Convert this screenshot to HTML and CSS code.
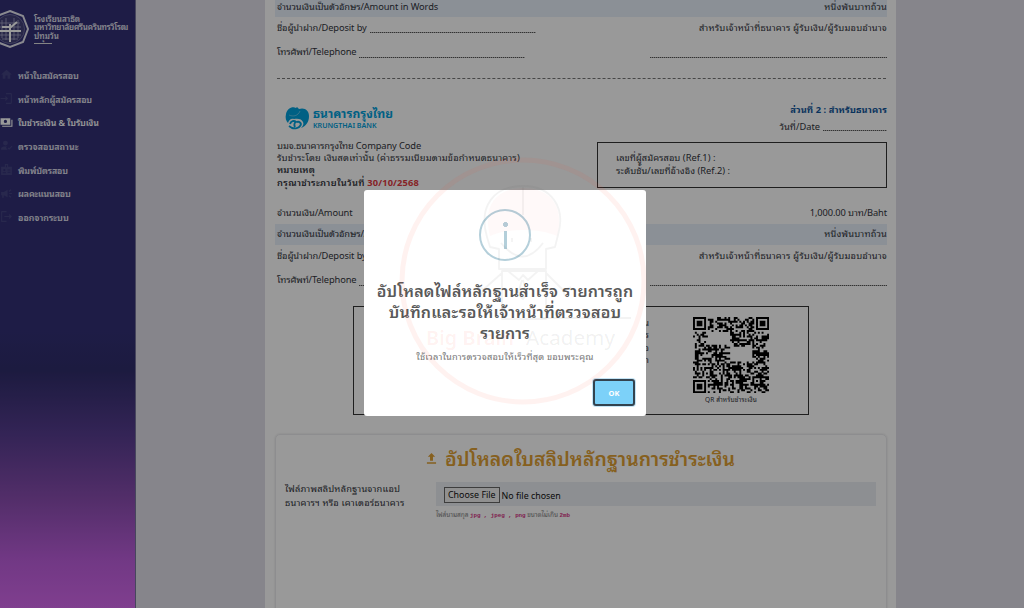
FILE: index.html
```
<!DOCTYPE html>
<html lang="th">

<head>
  <meta charset="UTF-8">
  <title>ใบชำระเงิน</title>
  <link rel="stylesheet" href="styles.css">
</head>

<body>
  <div class="layout">
    <nav class="sidebar">
      <div class="brand">
        <svg class="brand-logo" viewBox="0 0 40 40">
          <path d="M20 2 L33 7 L38 20 L33 33 L20 38 L7 33 L2 20 L7 7 Z" fill="none" stroke="#e4e4ee" stroke-width="2" />
          <circle cx="20" cy="20" r="14.5" fill="#434279" stroke="#6b6a9c" stroke-width="1" />
          <path d="M10 14H30M9 18H31M9 26H31M12 30H28M12 11V29M16 9V31M24 9V31M28 11V29" stroke="#a9a8c8" stroke-width=".8" />
          <path d="M20 15V33M10 22H31M12 18L21 18L27 13" fill="none" stroke="#fff" stroke-width="2" />
        </svg>
        <div class="brand-name">
          <div>โรงเรียนสาธิต</div>
          <div class="brand-uni">มหาวิทยาลัยศรีนครินทรวิโรฒ</div>
          <div>ปทุมวัน</div>
          <i class="brand-line"></i>
        </div>
      </div>
      <div class="menu">
        <a class="item"><svg viewBox="0 0 24 24"><path d="M10 20v-6h4v6h5v-8h3L12 3 2 12h3v8z" /></svg><span>หน้าใบสมัครสอบ</span></a>
        <a class="item"><svg viewBox="0 0 24 24"><path d="M10 17l5-5-5-5v4H1v2h9zM11 2h9a2 2 0 0 1 2 2v16a2 2 0 0 1-2 2h-9v-2h9V4h-9z" /></svg><span>หน้าหลักผู้สมัครสอบ</span></a>
        <a class="item active"><svg viewBox="0 0 24 24"><path d="M1 4h18v12H1zM10 7a3 3 0 1 0 0 6 3 3 0 0 0 0-6M21 7h2v13H4v-2h17z" fill-rule="evenodd" /></svg><span>ใบชำระเงิน &amp; ใบรับเงิน</span></a>
        <a class="item"><svg viewBox="0 0 24 24"><path d="M10 3a4 4 0 1 1 0 9 4 4 0 0 1 0-9M2 20v-3c1-3 6-4 11-3l-2 2 3 4zM14 17l3 3 6-6-1.500-1.500L17 17l-1.500-1.500z" /></svg><span class="status">ตรวจสอบสถานะ</span></a>
        <a class="item"><svg viewBox="0 0 24 24"><path d="M2 7h7V2h6v5h7v15H2zM11 4v4h2V4zM8 11a2 2 0 1 0 0 4 2 2 0 0 0 0-4M5 19h6v-2H5zM14 12v2h5v-2zM14 16v2h5v-2z" fill-rule="evenodd" /></svg><span>พิมพ์บัตรสอบ</span></a>
        <a class="item"><svg viewBox="0 0 24 24"><path d="M2 9h5l7-4v14l-7-4v5H4v-5H2zM17 11h5v2h-5zM16 7l4-3 1 2-4 3zM16 17l4 3 1-2-4-3z" /></svg><span>ผลคะแนนสอบ</span></a>
        <a class="item"><svg viewBox="0 0 24 24"><path d="M17 7l5 5-5 5v-4H8v-2h9zM3 2h9v2H4v16h8v2H3a1 1 0 0 1-1-1V3z" /></svg><span class="status">ออกจากระบบ</span></a>
      </div>
    </nav>

    <main class="page">
      <div class="paper">
        <div class="row band band-top"><span class="words">จำนวนเงินเป็นตัวอักษร/Amount in Words</span><span class="wide">หนึ่งพันบาทถ้วน</span></div>
        <div class="row deposit"><span class="lead"><span class="words">ชื่อผู้นำฝาก/Deposit by</span><i class="dots w166"></i></span><span class="wide">สำหรับเจ้าหน้าที่ธนาคาร ผู้รับเงิน/ผู้รับมอบอำนาจ</span></div>
        <div class="row phone"><span class="lead"><span class="words">โทรศัพท์/Telephone</span><i class="dots w166"></i></span><i class="dots w237"></i></div>
        <div class="cut"></div>

        <div class="bank-head">
          <div class="bank">
            <svg class="bank-logo" viewBox="0 0 24 25">
              <path d="M11 2C7 0 2 3 1 8c-1 4 0 7 2 9 1-3 3-5 6-4 4-1 8 0 9 3 1 2 0 4-2 6 5-2 8-6 8-12 0-5-4-9-10-7l-2-2z" fill="#00a0dc" />
              <path d="M5 18c1-3 4-4 6-2-2 1-2 3-1 5M12 16c3-1 5 2 3 4-1 2-5 3-8 2l-3-2" fill="none" stroke="#00a0dc" stroke-width="1.900" />
              <path d="M4 9c4 2 9 1 11-4" fill="none" stroke="#fff" stroke-opacity=".6" stroke-width=".6" />
            </svg>
            <div>
              <div class="bank-th">ธนาคารกรุงไทย</div>
              <div class="bank-en">KRUNGTHAI BANK</div>
            </div>
          </div>
          <div class="part">
            <b class="part-title">ส่วนที่ 2 : สำหรับธนาคาร</b>
            <span class="lead"><span class="date">วันที่/Date</span><i class="dots w64"></i></span>
          </div>
        </div>

        <div class="company">
          <div class="notes">
            <div class="words">บมจ.ธนาคารกรุงไทย Company Code</div>
            <div class="wide">รับชำระโดย เงินสดเท่านั้น (ค่าธรรมเนียมตามข้อกำหนดธนาคาร)</div>
            <div class="strong">หมายเหตุ</div>
            <div class="strong"><span class="pay-by">กรุณาชำระภายในวันที่</span> <span class="due">30/10/2568</span></div>
          </div>
          <div class="refs">
            <div>เลขที่ผู้สมัครสอบ (Ref.1) :</div>
            <div>ระดับชั้น/เลขที่อ้างอิง (Ref.2) :</div>
          </div>
        </div>

        <div class="row amount"><span class="words">จำนวนเงิน/Amount</span><span class="words">1,000.00 บาท/Baht</span></div>
        <div class="row band"><span class="words">จำนวนเงินเป็นตัวอักษร/Amount in Words</span><span class="wide">หนึ่งพันบาทถ้วน</span></div>
        <div class="row deposit"><span class="lead"><span class="words">ชื่อผู้นำฝาก/Deposit by</span><i class="dots w166"></i></span><span class="wide">สำหรับเจ้าหน้าที่ธนาคาร ผู้รับเงิน/ผู้รับมอบอำนาจ</span></div>
        <div class="row phone"><span class="lead"><span class="words">โทรศัพท์/Telephone</span><i class="dots w166"></i></span><i class="dots w237"></i></div>

        <div class="pay-box">
          <div class="pay-note">
            <div>น</div>
            <div>ร</div>
            <div>อ</div>
            <div>า</div>
          </div>
          <div class="qr">
            <svg id="qr" viewBox="0 0 41 41"></svg>
            <div class="qr-text">QR สำหรับชำระเงิน</div>
          </div>
        </div>

        <section class="upload">
          <h2 class="upload-title">
            <svg viewBox="0 0 12 12"><path d="M6 0l4 4.200H7.600V8.500H4.400V4.200H2zM1 10h10v1.600H1z" /></svg>
            <span>อัปโหลดใบสลิปหลักฐานการชำระเงิน</span>
          </h2>
          <div class="field">
            <label class="field-label">ไฟล์ภาพสลิปหลักฐานจากแอป<br>ธนาคารฯ หรือ เคาเตอร์ธนาคาร</label>
            <div class="field-body">
              <div class="file"><span class="file-btn">Choose File</span><span class="file-name">No file chosen</span></div>
              <div class="hint">ไฟล์นามสกุล <code>jpg , jpeg , png</code> ขนาดไม่เกิน <code>2mb</code></div>
            </div>
          </div>
        </section>
      </div>
    </main>
  </div>

  <div class="overlay">
    <div class="modal">
      <div class="modal-icon"><i></i></div>
      <div class="modal-title">
        <div class="line-first">อัปโหลดไฟล์หลักฐานสำเร็จ รายการถูก</div>
        <div class="line-second">บันทึกและรอให้เจ้าหน้าที่ตรวจสอบ</div>
        <div>รายการ</div>
      </div>
      <div class="modal-text">ใช้เวลาในการตรวจสอบให้เร็วที่สุด ขอบพระคุณ</div>
      <div class="modal-footer"><button class="ok">OK</button></div>
    </div>
  </div>

  <svg class="watermark" viewBox="0 0 250 250">
    <circle cx="125" cy="125" r="121" fill="none" stroke="#ff4a30" stroke-opacity=".07" stroke-width="5" />
    <path d="M92 80C84 50 98 32 125 32s42 18 34 48c-18-8-49-8-67 0z" fill="#ff4a30" fill-opacity=".03" />
    <g fill="none" stroke="#555" stroke-opacity=".07" stroke-width="1.800" stroke-linejoin="round">
      <path d="M101 93l-9-2-3-10C80 50 96 30 125 30s43 22 35 49l-3 12-9 2v20h-47z" />
      <path d="M125 31v28M103 87q22 27 42 0M114 82v4M133 82v4M104 115h44v48h-44zM104 117L86 133l-9-3M86 133l-3 6M148 117l17 17 8-3M165 134l2 6M110 115l11 9 4-5 5 5 10-9M124 124l-4 14 5 5 4-5-4-14" />
      <path d="M143 162h90" />
    </g>
    <text class="wm-red" x="28" y="189" textLength="88" lengthAdjust="spacingAndGlyphs">Big Brain</text>
    <text class="wm-grey" x="128" y="189" textLength="89" lengthAdjust="spacingAndGlyphs">Academy</text>
  </svg>

  <script src="script.js"></script>
</body>

</html>
```
FILE: styles.css
```
* {
  box-sizing: border-box;
}

body {
  margin: 0;
  height: 608px;
  overflow: hidden;
  font-family: "Noto Sans", "Noto Sans Thai Looped", "Noto Looped Thai", "Noto Sans Thai", sans-serif;
  font-size: 9.3px;
  color: #32343c;
  white-space: nowrap;
}

.layout {
  display: flex;
  height: 608px;
}

/* sidebar */
.sidebar {
  width: 136px;
  flex: none;
  padding-top: 9px;
  overflow: hidden;
  border-right: 1px solid #77769b;
  color: #fff;
  background: linear-gradient(#323076 0%, #323076 54%, #302d6b 61%, #553c8e 71%, #8a4db0 82%, #bd5edd 92%, #d569ee 100%);
}

.brand {
  display: flex;
  height: 54px;
}

.brand-logo {
  width: 40px;
  height: 40px;
  margin-left: -10px;
  flex: none;
}

.brand-name {
  margin: 6px 0 0 4px;
  font-size: 8px;
  font-weight: 600;
  line-height: 8.3px;
  color: #e4e4ee;
}

.brand-uni {
  letter-spacing: -.18px;
}

.brand-line {
  display: block;
  width: 18px;
  height: 1.5px;
  margin-top: 3px;
  background: #ddd;
}

.item {
  display: flex;
  align-items: center;
  height: 23.7px;
  font-size: 8.8px;
  font-weight: 600;
  letter-spacing: -.1px;
  color: #e4e4ee;
}

.item svg {
  width: 13px;
  height: 13px;
  margin-right: 5px;
  fill: #444380;
}

.item.active svg {
  fill: #fff;
}

.item.active {
  color: #fff;
}

.status {
  letter-spacing: .08px;
}

/* payment slip */
.page {
  flex: 1;
  background: #dfdee8;
}

.paper {
  width: 631px;
  height: 608px;
  margin-left: 129px;
  padding: 0 9px 0 10px;
  background: #fff;
}

.words {
  letter-spacing: -.11px;
}

.wide {
  letter-spacing: .17px;
}

.row {
  display: flex;
  align-items: center;
  justify-content: space-between;
  padding: 0 0 4px 2px;
  line-height: 13px;
}

.band {
  height: 21px;
  padding-bottom: 2px;
  background: #e8f0fb;
}

.band-top {
  height: 17px;
  padding-bottom: 4px;
}

.deposit {
  height: 24px;
}

.phone {
  height: 25px;
}

.lead {
  display: flex;
  align-items: center;
}

.dots {
  height: 1px;
  margin: 11px 0 0 3px;
  background: repeating-linear-gradient(90deg, #555 0 1px, #bbb 1px 2px);
}

.w166 {
  width: 166px;
}

.w237 {
  width: 237px;
}

.w64 {
  width: 64px;
  margin-top: 8px;
}

.cut {
  height: 13px;
  margin: 0 1px 0 2px;
  border-bottom: 1px dashed #777;
}

.bank-head {
  display: flex;
  justify-content: space-between;
  height: 61px;
  padding-top: 22px;
}

.bank {
  display: flex;
  height: 25px;
  margin: 5px 0 0 10px;
  color: #00a0dc;
}

.bank-logo {
  width: 24px;
  height: 25px;
  margin-right: 4px;
}

.bank-th {
  font-size: 12px;
  font-weight: 700;
  line-height: 16px;
}

.bank-en {
  font-size: 7.1px;
  font-weight: 600;
  line-height: 7px;
}

.part {
  display: flex;
  flex-direction: column;
  align-items: flex-end;
  line-height: 17px;
}

.part-title {
  letter-spacing: .07px;
  color: #10569b;
}

.company {
  display: flex;
  justify-content: space-between;
  height: 63px;
}

.notes {
  padding-left: 2px;
  line-height: 12.2px;
}

.strong {
  font-weight: 600;
}

.pay-by {
  letter-spacing: .34px;
}

.due {
  color: #df3a3f;
  font-weight: 700;
  letter-spacing: .15px;
}

.refs {
  width: 290px;
  height: 46px;
  margin-top: 2px;
  padding: 9px 0 0 18px;
  border: 1.5px solid #333;
  line-height: 12.5px;
  letter-spacing: .03px;
}

.amount {
  height: 21px;
  padding-bottom: 3px;
}

.pay-box {
  display: flex;
  justify-content: space-between;
  width: 456px;
  height: 109px;
  margin: 12px 0 0 78px;
  padding: 10px 39px 0 280px;
  border: 1.5px solid #333;
}

.pay-note {
  width: 15px;
  text-align: right;
  line-height: 12.4px;
}

.qr svg {
  display: block;
  width: 76px;
  height: 76px;
}

.qr-text {
  text-align: center;
  font-size: 6.5px;
  line-height: 13px;
  letter-spacing: .14px;
}

/* upload card */
.upload {
  height: 200px;
  margin-top: 19px;
  padding: 5px 10px 0 9px;
  border: 1px solid #ebebee;
  border-radius: 5px;
  box-shadow: 0 0 2px #ddd;
}

.upload-title {
  display: flex;
  align-items: center;
  justify-content: center;
  gap: 8px;
  height: 34px;
  margin: 0;
  font-size: 19.4px;
  font-weight: 600;
  color: #e0a034;
}

.upload-title svg {
  width: 11px;
  height: 11px;
  margin-top: 3px;
  fill: #e0a034;
}

.field {
  display: flex;
  padding-top: 8px;
}

.field-label {
  width: 151px;
  line-height: 13.5px;
  letter-spacing: .17px;
}

.field-body {
  flex: 1;
}

.file {
  display: flex;
  align-items: center;
  height: 24px;
  padding: 2px 0 0 8px;
  background: #ebeef3;
  color: #111;
  font-size: 8.9px;
}

.file-btn {
  height: 16px;
  padding: 0 3px;
  margin-right: 2px;
  border: 1px solid #666;
  background: #f0f0f0;
  line-height: 14px;
}

.hint {
  font-size: 6.5px;
  line-height: 17px;
  letter-spacing: -.06px;
  color: #888;
}

.hint code {
  font-family: "Liberation Mono", monospace;
  font-size: 5.9px;
  font-weight: 700;
  color: #d63384;
}

/* alert */
.overlay {
  position: absolute;
  inset: 0;
  background: rgba(0, 0, 0, .4);
}

.modal {
  position: absolute;
  left: 364px;
  top: 190px;
  width: 282px;
  height: 226px;
  padding-top: 19px;
  border-radius: 3px;
  background: #fff;
  text-align: center;
}

.modal-icon {
  display: flex;
  align-items: center;
  justify-content: center;
  width: 52px;
  height: 52px;
  margin: 0 auto;
  border: 2px solid #b4cfda;
  border-radius: 50%;
}

.modal-icon i {
  width: 5px;
  height: 27px;
  background: radial-gradient(circle at 2.5px 2.5px, #b4cfda 2.2px, transparent 2.8px) top / 5px 5px no-repeat,
    linear-gradient(#b4cfda, #b4cfda) bottom / 3px 18px no-repeat;
}

.modal-title {
  margin-top: 20px;
  font-size: 16px;
  font-weight: 600;
  line-height: 21px;
  color: #595959;
}

.line-first {
  letter-spacing: .12px;
}

.line-second {
  letter-spacing: .2px;
}

.modal-text {
  margin-top: 5px;
  line-height: 16px;
  letter-spacing: .18px;
  color: #777;
}

.modal-footer {
  display: flex;
  justify-content: flex-end;
  padding: 14px 11px 0 0;
}

.ok {
  width: 42px;
  height: 27px;
  border: 2px solid #33434f;
  border-radius: 3px;
  background: #7cd1f9;
  color: #fff;
  font-family: "Noto Sans", sans-serif;
  font-size: 7.5px;
  font-weight: 700;
  box-shadow: 0 0 0 1px #c4e4f5;
}

.watermark {
  position: absolute;
  left: 398px;
  top: 156px;
  width: 250px;
  height: 250px;
}

.wm-red,
.wm-grey {
  font-size: 19px;
  font-weight: 600;
  fill: #ff4a30;
  fill-opacity: .08;
}

.wm-grey {
  font-weight: 400;
  fill: #333;
}
```
FILE: script.js
```
var SIZE = 41;
var svg = document.getElementById('qr');
var seed = 7;

function rand() {
  seed = (seed * 16807) % 2147483647;
  return seed / 2147483647;
}

function ring(x, y, cx, cy) {
  return Math.max(Math.abs(x - cx), Math.abs(y - cy));
}

function isDark(x, y) {
  var noise = rand() < 0.52;
  var finders = [[3, 3], [37, 3], [3, 37]];
  for (var i = 0; i < finders.length; i++) {
    var r = ring(x, y, finders[i][0], finders[i][1]);
    if (r <= 4) return r < 2 || r === 3;
  }
  var a = ring(x, y, 34, 34);
  if (a <= 2) return a !== 1;
  // blank areas
  if (x > 7 && x < 20 && y > 7 && y < 15) return false;
  if (x > 19 && x < 32 && y > 15 && y < 24) return false;
  return noise;
}

var d = '';
for (var y = 0; y < SIZE; y++) {
  for (var x = 0; x < SIZE; x++) {
    if (isDark(x, y)) d += 'M' + x + ' ' + y + 'h1.05v1.05h-1.05z';
  }
}
var path = document.createElementNS('http://www.w3.org/2000/svg', 'path');
path.setAttribute('d', d);
svg.appendChild(path);
```
